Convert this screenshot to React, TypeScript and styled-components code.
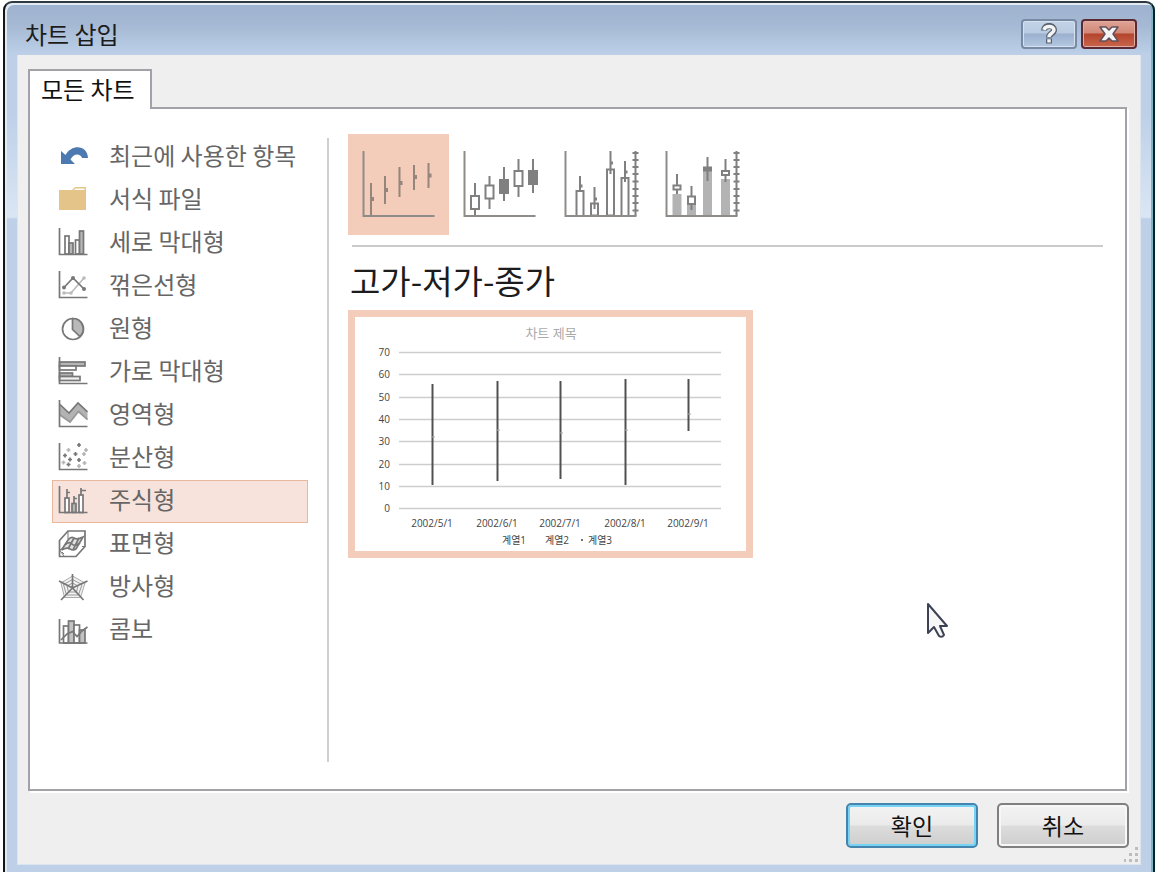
import React from "react";
import styled, { createGlobalStyle, css } from "styled-components";

const GlobalStyle = createGlobalStyle`
  *, *::before, *::after { box-sizing: border-box; }
  html, body { margin: 0; padding: 0; background: #fff; }
  body { font-family: "Noto Sans CJK KR", "Open Sans", sans-serif; color: #1c1c1c; overflow: hidden; }
  button { font-family: inherit; margin: 0; }
`;

const Page = styled.div`
  position: relative;
  height: 100vh;
  padding: 1px 3px 0;
`;

const Frame = styled.div`
  display: flex;
  flex-direction: column;
  height: 100%;
  padding: 0 12px 7px 12px;
  border: 2px solid #10161a;
  border-top-color: #2f3a40;
  border-right-color: #04222c;
  border-bottom: 0;
  border-radius: 9px 9px 0 0;
  box-shadow: inset 2px 2px 0 #e3eaf2, inset -2px 0 0 #7fb4c6;
  background: linear-gradient(#9db2ce 0, #a5b9d4 22px, #bdd0e8 52px, #bdd0e8 110px, #dbe6f4 214px, #bed0e8 216px);
`;

const TitleBar = styled.header`
  display: flex;
  align-items: center;
  justify-content: space-between;
  height: 52px;
  flex: none;
  padding: 10px 4px 0 8px;
`;

const WindowTitle = styled.h1`
  margin: 0;
  font-size: 24px;
  font-weight: 400;
  line-height: 36px;
`;

const Captions = styled.div`
  display: flex;
  gap: 4px;
`;

const CaptionButton = styled.button<{ $danger?: boolean }>`
  display: grid;
  place-items: center;
  width: 56px;
  height: 30px;
  padding: 0;
  border-radius: 4px;
  border: 2px solid ${(p) => (p.$danger ? "#5a2a35" : "#7789a3")};
  box-shadow: inset 0 0 0 1px ${(p) => (p.$danger ? "#e3aca3" : "#d6e2f0")};
  background: ${(p) =>
    p.$danger
      ? "linear-gradient(#dfa396, #d18877 46%, #b3452c 50%, #c9654c)"
      : "linear-gradient(#c3d3e7, #b9cbe1 46%, #9ab0cd 50%, #b4c8e1)"};
`;

const Client = styled.main`
  position: relative;
  display: flex;
  flex-direction: column;
  flex: 1;
  min-height: 0;
  padding: 14px 11px 16px 10px;
  border: 1px solid #dbe4ef;
  border-top: 0;
  background: #efefef;
`;

const Tab = styled.button`
  align-self: flex-start;
  flex: none;
  height: 40px;
  padding: 0 15px 3px 11px;
  margin-bottom: -2px;
  border: 2px solid #a2a2a8;
  border-bottom: 0;
  background: #fff;
  color: #111;
  font-size: 24px;
  line-height: 34px;
  z-index: 1;
`;

const Panel = styled.section`
  display: flex;
  flex: 1;
  min-height: 0;
  margin-right: 2px;
  padding: 25px 22px 27px 22px;
  border: 2px solid #a2a2a8;
  box-shadow: 2px 2px 0 #fff;
  background: #fff;
`;

const Sidebar = styled.nav`
  width: 277px;
  flex: none;
  margin-top: 4px;
  border-right: 2px solid #cfcfcf;
`;

const TypeList = styled.ul`
  list-style: none;
  margin: -2px 0 0;
  padding: 0;
`;

const TypeButton = styled.button<{ $active?: boolean }>`
  display: flex;
  align-items: center;
  gap: 21px;
  width: 256px;
  height: 43px;
  padding: 0 5px;
  border: 1px solid transparent;
  background: transparent;
  color: #666;
  font-size: 24px;
  line-height: 32px;
  white-space: nowrap;
  ${(p) =>
    p.$active &&
    css`
      border-color: #e8b79c;
      background: #f7e3dc;
    `}
`;

const TypeLabel = styled.span`
  padding-bottom: 6px;
`;

const Details = styled.div`
  flex: 1;
  min-width: 0;
  padding-left: 19px;
`;

const Subtypes = styled.div`
  display: flex;
`;

const SubtypeButton = styled.button<{ $active?: boolean }>`
  width: 101px;
  height: 101px;
  padding: 0;
  border: 0;
  background: ${(p) => (p.$active ? "#f4cdba" : "transparent")};
  svg { display: block; }
`;

const Rule = styled.hr`
  height: 2px;
  margin: 10px 0 0 4px;
  border: 0;
  background: #cbcbcb;
`;

const SubtypeTitle = styled.h2`
  margin: 10px 0 6px 2px;
  font-size: 33px;
  line-height: 47px;
  font-weight: 400;
  color: #1c1c1c;
`;

const Preview = styled.figure`
  width: 405px;
  margin: 0;
  border: 7px solid #f4cdba;
  svg { display: block; }
`;

const Footer = styled.footer`
  display: flex;
  justify-content: flex-end;
  flex: none;
  gap: 19px;
  padding-top: 12px;
`;

const ActionButton = styled.button<{ $primary?: boolean }>`
  width: 132px;
  height: 45px;
  padding: 0 0 2px;
  border-radius: 5px;
  border: 2px solid ${(p) => (p.$primary ? "#4584ad" : "#808080")};
  box-shadow: inset 0 0 0 2px ${(p) => (p.$primary ? "#77d3f3" : "#f7f7f7")};
  background: linear-gradient(#f3f3f3, #ebebeb 48%, #dcdcdc 52%, #cecece);
  color: #111;
  font-size: 23px;
  line-height: 32px;
`;

const Grip = styled.svg`
  position: absolute;
  right: 1px;
  bottom: 2px;
`;

const Pointer = styled.svg`
  position: absolute;
  left: 80%;
  top: 602px;
`;

const INK = "#777";

const Axis = () => <path d="M1.5 0V26.5H29.5" />;

const plus = (x: number, y: number) => `M${x - 2} ${y}h4M${x} ${y - 2}v4`;

const typeIcons: Record<string, React.ReactNode> = {
  recent: (
    <path stroke="none" fill="#4c79b0" d="M3 9V22H17L12.500 17.500C15 11.500 22.500 10.500 24 16H30C29.500 3 14 1.500 7.500 13Z" />
  ),
  folder: (
    <g stroke="none">
      <path fill="#e5c48a" d="M1 5H14L17 2H28V25H1Z" />
      <path fill="#fff" d="M17.500 3.500H26.500V5H16Z" />
    </g>
  ),
  column: (
    <>
      <rect x="7" y="8" width="4" height="18" fill="#fff" />
      <rect x="11" y="15" width="4" height="11" fill="#b5b5b5" />
      <rect x="17.500" y="12" width="4" height="14" fill="#fff" />
      <rect x="21.500" y="3" width="4" height="23" fill="#b5b5b5" />
      <Axis />
    </>
  ),
  line: (
    <>
      <path stroke="#bbb" d="M6 22H13L26 7" />
      <g stroke="none" fill="#bbb">
        <circle cx="6" cy="22" r="1.800" />
        <circle cx="13" cy="22" r="1.800" />
        <circle cx="26" cy="7" r="1.800" />
      </g>
      <path d="M6 16.500L15 7L26 18" />
      <g stroke="none" fill={INK}>
        <circle cx="6" cy="16.500" r="2" />
        <circle cx="15" cy="7" r="2" />
        <circle cx="26" cy="18" r="2" />
      </g>
      <Axis />
    </>
  ),
  pie: (
    <>
      <circle cx="15" cy="15" r="10.500" />
      <path fill="#b9b9b9" d="M14.500 4.500V15.500L22 22.500A10.500 10.500 0 0 0 14.500 4.500Z" />
    </>
  ),
  bar: (
    <>
      <rect x="1.500" y="5" width="25.500" height="4" fill="#b5b5b5" />
      <rect x="1.500" y="9" width="16.500" height="4" fill="#fff" />
      <rect x="1.500" y="16" width="13" height="3.500" fill="#b5b5b5" />
      <rect x="1.500" y="19.500" width="20.500" height="4" fill="#eee" />
      <Axis />
    </>
  ),
  area: (
    <>
      <path stroke="none" fill="#b3b3b3" d="M2 4.500L11 13L20 3L29.500 12V19.500L20.500 11.500L12 22L2 15Z" />
      <path d="M2 4.500L11 13L20 3L29.500 12" />
      <path stroke="#999" d="M29.500 19.500L20.500 11.500L12 22L2 15" />
      <Axis />
    </>
  ),
  scatter: (
    <>
      <path d={[plus(7, 12.5), plus(12, 16.5), plus(17.5, 11), plus(21, 17), plus(10.5, 21.5), plus(21, 2)].join("")} />
      <path stroke="#b5b5b5" d={[plus(10.5, 7), plus(26, 11), plus(5.5, 19.5), plus(26.5, 20), plus(21, 23), plus(28, 7)].join("")} />
      <Axis />
    </>
  ),
  stock: (
    <>
      <path d="M9 3V12M9 6.500H12M16 10V17M16 12.500H19M23 2V9M23 4.500H28" />
      <rect x="7" y="12" width="4" height="14.500" fill="#fff" />
      <rect x="14" y="17.500" width="4" height="9" fill="#b5b5b5" />
      <rect x="21" y="9" width="4" height="17.500" fill="#fff" />
      <Axis />
    </>
  ),
  surface: (
    <>
      <path fill="#fff" d="M1.500 11.500L10 2H27V17.500L18 27.500H1.500Z" />
      <path strokeWidth="1" d="M10 2V10M1.500 11.500V21L6 27M27 17.500H24M1.500 21L6 19" />
      <path fill="#e2e2e2" d="M3.500 21L10 11Q13 7 16 9T25 8L18 20Q15 22 12 20T3.500 21Z" />
      <path d="M7 16Q11 12 14 15T22 14M10 20L16 9M15 21L21 9" />
      <path strokeWidth="1" d="M6 25L4 23" />
    </>
  ),
  radar: (
    <>
      <path strokeWidth="1" stroke="#aaa" fill="#f2f2f2" d="M14.500 4L27 11L22.500 25.500H6.500L3 11Z" />
      <path strokeWidth="1" stroke="#999" d="M14.500 7.500L24 12.500L20.500 23H8.500L5.500 12.500ZM14.500 11L20 14L18.500 20H10.500L9 14Z" />
      <path d="M14.500 2V16L29.500 9M1 9L14.500 16L25.500 28M14.500 16L3 28" />
    </>
  ),
  combo: (
    <>
      <rect x="5.500" y="11" width="5" height="17" fill="#fff" />
      <rect x="10.500" y="6" width="5.500" height="22" fill="#c2c2c2" />
      <rect x="16" y="10" width="5.500" height="18" fill="#fff" />
      <rect x="21.500" y="15" width="5.500" height="13" fill="#c2c2c2" />
      <path d="M3 25L9 19L14.500 16.500L19 21.500L24 16L29.500 12" />
      <path d="M1.500 4V28H29.500" />
    </>
  ),
};

const TypeIcon = ({ name }: { name: string }) => (
  <svg width="30" height="32" viewBox="0 0 30 32" fill="none" stroke={INK} strokeWidth="1.700" aria-hidden="true">
    {typeIcons[name]}
  </svg>
);

const chartTypes = [
  { icon: "recent", label: "최근에 사용한 항목" },
  { icon: "folder", label: "서식 파일" },
  { icon: "column", label: "세로 막대형" },
  { icon: "line", label: "꺾은선형" },
  { icon: "pie", label: "원형" },
  { icon: "bar", label: "가로 막대형" },
  { icon: "area", label: "영역형" },
  { icon: "scatter", label: "분산형" },
  { icon: "stock", label: "주식형", active: true },
  { icon: "surface", label: "표면형" },
  { icon: "radar", label: "방사형" },
  { icon: "combo", label: "콤보" },
];

const VolumeAxis = () => (
  <path d={"M85.500 17V82" + [19, 26, 33, 40, 47.5, 55, 62, 69, 76.5].map((y) => `M82.500 ${y}h6`).join("")} />
);

const subtypes = [
  {
    label: "고가-저가-종가",
    art: (
      <>
        <path d="M23 49V82M37 42V70M51.500 33V63M66 31V56M80.500 29V54" />
        <path strokeWidth="4" d="M23 65h3M37 56h3M51.500 49h3M66 43h3M80.500 41.500h3" />
      </>
    ),
  },
  {
    label: "시가-고가-저가-종가",
    art: (
      <>
        <path d="M26 49V82M40.500 42V75M55 33V67M69.500 25V63M84 25V59" />
        <g fill="#fff">
          <rect x="22" y="62" width="8" height="13" />
          <rect x="36.500" y="51.500" width="8" height="13" />
          <rect x="65.500" y="37" width="8" height="15" />
        </g>
        <g fill="#808080">
          <rect x="51" y="46" width="8" height="13" />
          <rect x="80" y="37" width="8" height="13" />
        </g>
      </>
    ),
  },
  {
    label: "거래량-고가-저가-종가",
    art: (
      <>
        <g fill="#fff">
          <rect x="26.500" y="57" width="7" height="25" />
          <rect x="41" y="69.500" width="7" height="12" />
          <rect x="57" y="35.500" width="7" height="46" />
          <rect x="71.500" y="44" width="7" height="38" />
        </g>
        <path d="M30 42V57M44.500 53V75M60.500 17V40M75 27V48" />
        <path strokeWidth="3" d="M30 52h2.500M44.500 65h2.500M60.500 29h2.500M75 38h2.500" />
        <VolumeAxis />
      </>
    ),
  },
  {
    label: "거래량-시가-고가-저가-종가",
    art: (
      <>
        <path stroke="#b3b3b3" strokeWidth="9" d="M26 60V82M40.500 69V82M56.500 37V82M74.500 45V82" />
        <path d="M26 40V60M40.500 52V76M56.500 23V47M74.500 25V48" />
        <g fill="#fff">
          <rect x="22.500" y="51.500" width="7" height="4" />
          <rect x="37" y="62.500" width="7" height="7.500" />
          <rect x="71" y="37" width="7" height="4" />
        </g>
        <rect x="53" y="33.500" width="7" height="3" fill="#808080" />
        <VolumeAxis />
      </>
    ),
  },
];

const gridLines = [70, 60, 50, 40, 30, 20, 10, 0].map((value, i) => ({ value, y: 35 + Math.round(i * 22.3) }));

const series = [
  { date: "2002/5/1", x: 77, high: 67, low: 168, close: 120 },
  { date: "2002/6/1", x: 142, high: 64, low: 164, close: 113 },
  { date: "2002/7/1", x: 205, high: 64, low: 162, close: 116 },
  { date: "2002/8/1", x: 270, high: 62, low: 168, close: 113 },
  { date: "2002/9/1", x: 333, high: 62, low: 114, close: 97 },
];

const PreviewChart = () => (
  <svg width="391" height="234" viewBox="0 0 391 234" fontFamily='"Open Sans", "Noto Sans CJK KR", sans-serif' fontSize="10" fill="#444">
    <text x="196" y="21" textAnchor="middle" fontSize="13" fill="#aaa">차트 제목</text>
    {gridLines.map((g) => (
      <g key={g.value}>
        <path d={`M44 ${g.y}.500H366`} stroke="#cdcdcd" strokeWidth="1.500" />
        <text x="35" y={g.y + 4} textAnchor="end">{g.value}</text>
      </g>
    ))}
    {series.map((s) => (
      <g key={s.date}>
        <path d={`M${s.x}.500 ${s.high}V${s.low}`} stroke="#505050" strokeWidth="2" />
        <path d={`M${s.x} ${s.close}h3`} stroke="#aaa" />
        <text x={s.x} y="210" textAnchor="middle">{s.date}</text>
      </g>
    ))}
    <g textAnchor="middle">
      <text x="159" y="227">계열1</text>
      <text x="202" y="227">계열2</text>
      <circle cx="227" cy="223" r="1" />
      <text x="245" y="227">계열3</text>
    </g>
  </svg>
);

export default function App() {
  return (
    <Page>
      <GlobalStyle />
      <Frame role="dialog" aria-labelledby="dialog-title">
        <TitleBar>
          <WindowTitle id="dialog-title">차트 삽입</WindowTitle>
          <Captions>
            <CaptionButton aria-label="도움말">
              <svg width="18" height="22" viewBox="0 0 18 22" fill="none">
                <path d="M4 7.500C4 1.500 14 1.500 14 7C14 10.500 9 10.500 9 14.500M9 15.500V20.500" stroke="#56606f" strokeWidth="6" />
                <path d="M4 6.800C5 2.500 14 2.500 14 7C14 10.500 9 10 9 14M9 16.200V19.500" stroke="#f4f4f4" strokeWidth="3.500" />
              </svg>
            </CaptionButton>
            <CaptionButton $danger aria-label="닫기">
              <svg width="22" height="18" viewBox="0 0 22 18">
                <path d="M2 2H8L11 5L14 2H20L15 9L20 16H14L11 13L8 16H2L7 9Z" fill="#f4f4f4" stroke="#61505a" strokeWidth="1.500" strokeLinejoin="round" />
              </svg>
            </CaptionButton>
          </Captions>
        </TitleBar>
        <Client>
          <Tab role="tab" aria-selected="true">모든 차트</Tab>
          <Panel>
            <Sidebar>
              <TypeList>
                {chartTypes.map((t) => (
                  <li key={t.icon}>
                    <TypeButton $active={t.active}>
                      <TypeIcon name={t.icon} />
                      <TypeLabel>{t.label}</TypeLabel>
                    </TypeButton>
                  </li>
                ))}
              </TypeList>
            </Sidebar>
            <Details>
              <Subtypes>
                {subtypes.map((s, i) => (
                  <SubtypeButton key={s.label} $active={i === 0} aria-label={s.label}>
                    <svg width="101" height="101" viewBox="0 0 101 101" fill="none" stroke={i === 0 ? "#94857d" : "#808080"} strokeWidth="2">
                      {s.art}
                      <path d="M15.500 17V82H86.500" stroke="#8f8b89" />
                    </svg>
                  </SubtypeButton>
                ))}
              </Subtypes>
              <Rule />
              <SubtypeTitle>고가-저가-종가</SubtypeTitle>
              <Preview>
                <PreviewChart />
              </Preview>
            </Details>
          </Panel>
          <Footer>
            <ActionButton $primary>확인</ActionButton>
            <ActionButton>취소</ActionButton>
          </Footer>
          <Grip width="15" height="15" viewBox="0 0 15 15" fill="#bdbdbd" aria-hidden="true">
            <path d="M11 0h3v3h-3zM11 6h3v3h-3zM5 6h3v3h-3zM11 12h3v3h-3zM5 12h3v3h-3zM0 12h2v3h-2z" />
          </Grip>
        </Client>
      </Frame>
      <Pointer width="24" height="38" viewBox="0 0 24 38" aria-hidden="true">
        <path d="M2 2V31L8 25L13 34Q16 36 18 33L14 24H21Z" fill="#f7f7f7" stroke="#3c4254" strokeWidth="2" strokeLinejoin="round" />
      </Pointer>
    </Page>
  );
}
